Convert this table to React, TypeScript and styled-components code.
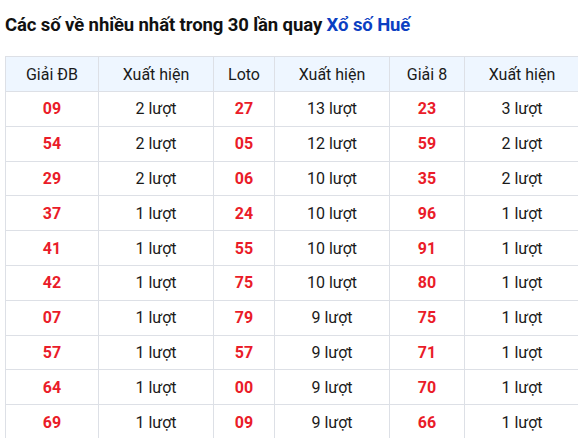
import React from "react";
import styled, { createGlobalStyle } from "styled-components";

const Global = createGlobalStyle`
  html, body { margin: 0; padding: 0; background: #fff; overflow: hidden; }
  body { font-family: Roboto, "Noto Sans", Arial, sans-serif; color: #1a1a1a; }
`;

const Page = styled.div`
  width: 578px;
  height: 438px;
  overflow: hidden;
  padding: 12px 0 0 5px;
  box-sizing: border-box;
`;

const Title = styled.h2`
  margin: 0 0 18px 0;
  font-size: 18.5px;
  line-height: 26px;
  font-weight: 700;
  color: #111;
  white-space: nowrap;
  letter-spacing: -0.1px;
`;

const Link = styled.span`
  color: #0b3fc2;
`;

const Table = styled.table`
  border-collapse: collapse;
  table-layout: fixed;
  width: 574px;
  font-size: 16px;
`;

const Th = styled.th<{ $w: number }>`
  width: ${(p) => p.$w}px;
  height: 34px;
  padding: 0;
  font-weight: 400;
  text-align: center;
  background: #eef6ff;
  border: 1px solid #dde0e6;
  color: #1a1a1a;
`;

const Td = styled.td<{ $num?: boolean }>`
  height: 33.8px;
  padding: 0;
  text-align: center;
  border: 1px solid #dde0e6;
  color: ${(p) => (p.$num ? "#ea1c29" : "#1a1a1a")};
  font-weight: ${(p) => (p.$num ? 700 : 400)};
`;

const rows: [string, string, string, string, string, string][] = [
  ["09", "2", "27", "13", "23", "3"],
  ["54", "2", "05", "12", "59", "2"],
  ["29", "2", "06", "10", "35", "2"],
  ["37", "1", "24", "10", "96", "1"],
  ["41", "1", "55", "10", "91", "1"],
  ["42", "1", "75", "10", "80", "1"],
  ["07", "1", "79", "9", "75", "1"],
  ["57", "1", "57", "9", "71", "1"],
  ["64", "1", "00", "9", "70", "1"],
  ["69", "1", "09", "9", "66", "1"],
];

const headers: [string, number][] = [
  ["Giải ĐB", 92],
  ["Xuất hiện", 114],
  ["Loto", 60],
  ["Xuất hiện", 114],
  ["Giải 8", 74],
  ["Xuất hiện", 114],
];

export default function App() {
  return (
    <Page>
      <Global />
      <Title>
        Các số về nhiều nhất trong 30 lần quay <Link>Xổ số Huế</Link>
      </Title>
      <Table>
        <thead>
          <tr>
            {headers.map(([h, w], i) => (
              <Th key={i} $w={w}>
                {h}
              </Th>
            ))}
          </tr>
        </thead>
        <tbody>
          {rows.map((r, i) => (
            <tr key={i}>
              <Td $num>{r[0]}</Td>
              <Td>{r[1]} lượt</Td>
              <Td $num>{r[2]}</Td>
              <Td>{r[3]} lượt</Td>
              <Td $num>{r[4]}</Td>
              <Td>{r[5]} lượt</Td>
            </tr>
          ))}
        </tbody>
      </Table>
    </Page>
  );
}
